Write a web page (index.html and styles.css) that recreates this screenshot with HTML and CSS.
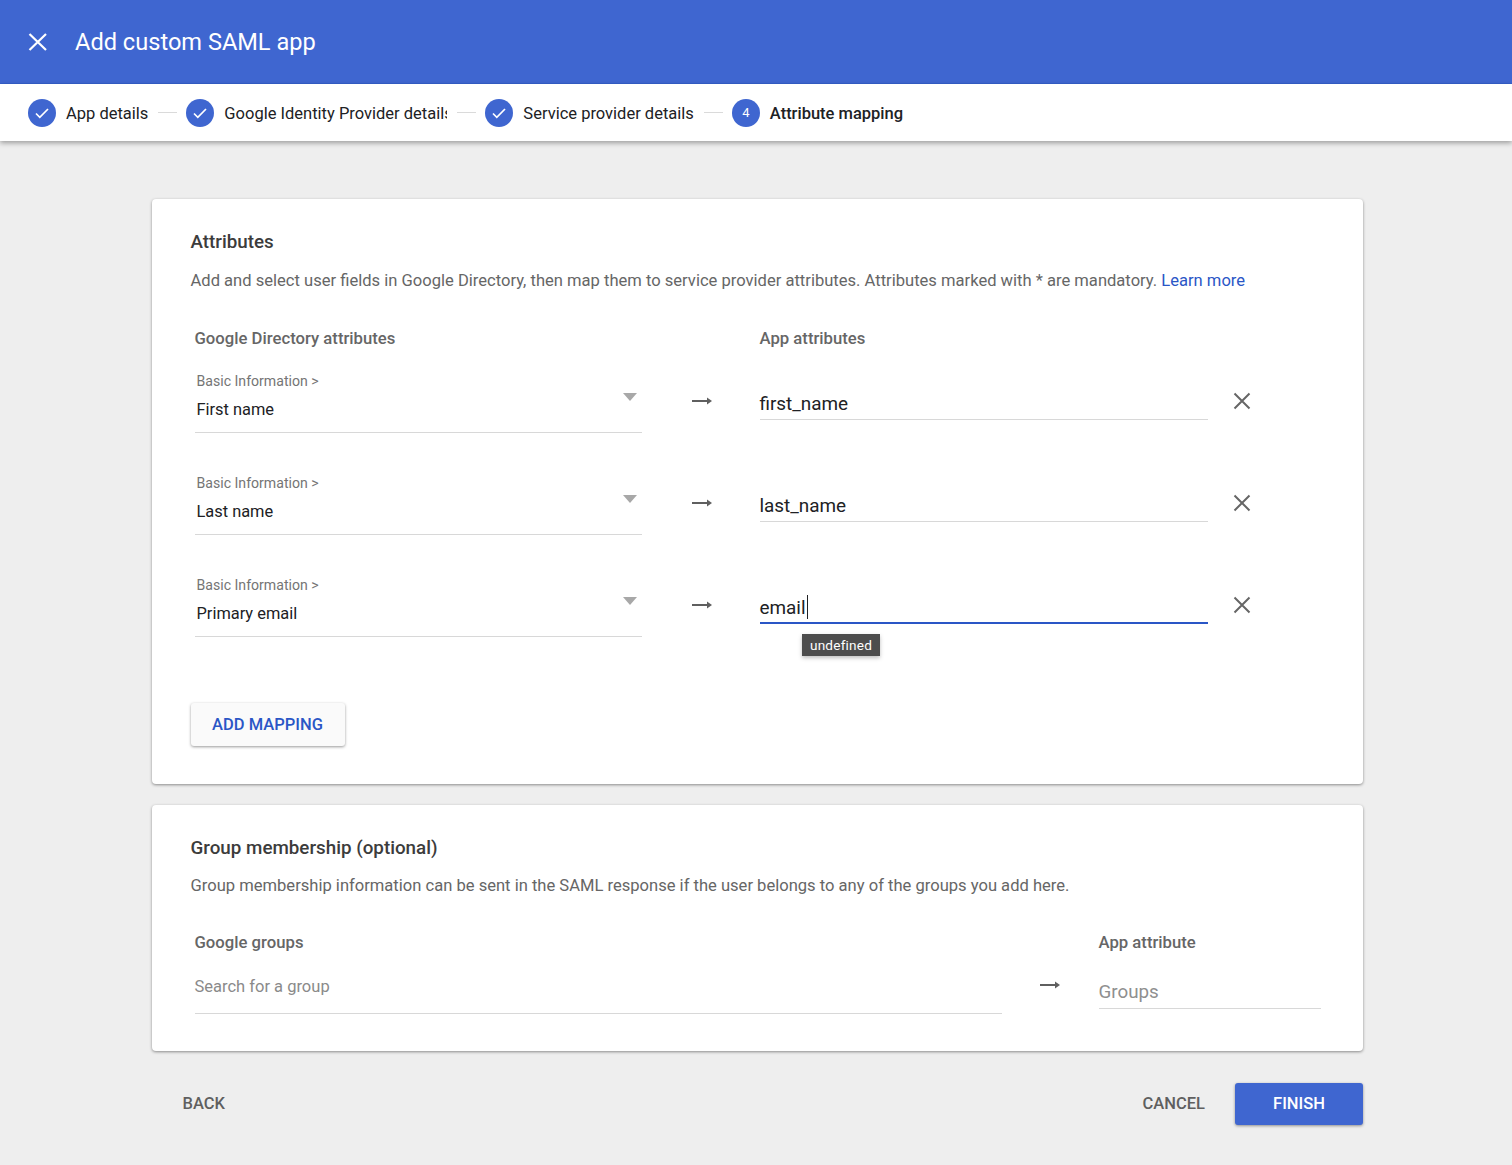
FILE: index.html
```html
<!DOCTYPE html>
<html lang="en">
<head>
<meta charset="utf-8">
<title>Add custom SAML app</title>
<link rel="stylesheet" href="styles.css">
</head>
<body>
<header class="topbar">
  <svg class="close-icon" width="20" height="20" viewBox="0 0 20 20"><path d="M1.500 2L18 18M18 2L1.500 18" fill="none" stroke="#fff" stroke-width="2.200"/></svg>
  <h1 class="title">Add custom SAML app</h1>
</header>
<nav class="stepper">
  <div class="step">
    <span class="badge"><svg width="14" height="12" viewBox="0 0 14 12"><path d="M1 6.500L4.800 10.300L13 2" fill="none" stroke="#fff" stroke-width="1.700"/></svg></span>
    <span class="step-label">App details</span>
  </div>
  <span class="connector"></span>
  <div class="step">
    <span class="badge"><svg width="14" height="12" viewBox="0 0 14 12"><path d="M1 6.500L4.800 10.300L13 2" fill="none" stroke="#fff" stroke-width="1.700"/></svg></span>
    <span class="step-label step-label-clip">Google Identity Provider details</span>
  </div>
  <span class="connector"></span>
  <div class="step">
    <span class="badge"><svg width="14" height="12" viewBox="0 0 14 12"><path d="M1 6.500L4.800 10.300L13 2" fill="none" stroke="#fff" stroke-width="1.700"/></svg></span>
    <span class="step-label">Service provider details</span>
  </div>
  <span class="connector"></span>
  <div class="step">
    <span class="badge badge-num">4</span>
    <span class="step-label step-label-active">Attribute mapping</span>
  </div>
</nav>
<main class="content">
  <section class="card card-attrs">
    <h2 class="card-title">Attributes</h2>
    <p class="card-desc">Add and select user fields in Google Directory, then map them to service provider attributes. Attributes marked with * are mandatory. <a class="link" href="#">Learn more</a></p>
    <div class="map-grid map-head">
      <div class="col-head">Google Directory attributes</div>
      <div></div>
      <div class="col-head">App attributes</div>
      <div></div>
    </div>
    <div class="map-grid map-row">
      <div class="select">
        <div class="select-crumb">Basic Information &gt;</div>
        <div class="select-value">First name</div>
        <span class="caret"></span>
      </div>
      <svg class="arrow" width="20" height="10" viewBox="0 0 20 10"><path d="M0 5H17" stroke="#5f5f5f" stroke-width="2"/><path d="M15 1.5L20 5L15 8.500Z" fill="#5f5f5f"/></svg>
      <div class="app-input">first_name</div>
      <svg class="remove" width="18" height="18" viewBox="0 0 18 18"><path d="M1.500 1.500L16.500 16.500M16.500 1.500L1.500 16.500" fill="none" stroke="#666" stroke-width="2"/></svg>
    </div>
    <div class="map-grid map-row">
      <div class="select">
        <div class="select-crumb">Basic Information &gt;</div>
        <div class="select-value">Last name</div>
        <span class="caret"></span>
      </div>
      <svg class="arrow" width="20" height="10" viewBox="0 0 20 10"><path d="M0 5H17" stroke="#5f5f5f" stroke-width="2"/><path d="M15 1.5L20 5L15 8.500Z" fill="#5f5f5f"/></svg>
      <div class="app-input">last_name</div>
      <svg class="remove" width="18" height="18" viewBox="0 0 18 18"><path d="M1.500 1.500L16.500 16.500M16.500 1.500L1.500 16.500" fill="none" stroke="#666" stroke-width="2"/></svg>
    </div>
    <div class="map-grid map-row">
      <div class="select">
        <div class="select-crumb">Basic Information &gt;</div>
        <div class="select-value">Primary email</div>
        <span class="caret"></span>
      </div>
      <svg class="arrow" width="20" height="10" viewBox="0 0 20 10"><path d="M0 5H17" stroke="#5f5f5f" stroke-width="2"/><path d="M15 1.5L20 5L15 8.500Z" fill="#5f5f5f"/></svg>
      <div class="app-input app-input-focus">email<span class="cursor"></span><span class="tooltip">undefined</span></div>
      <svg class="remove" width="18" height="18" viewBox="0 0 18 18"><path d="M1.500 1.500L16.500 16.500M16.500 1.500L1.500 16.500" fill="none" stroke="#666" stroke-width="2"/></svg>
    </div>
    <button class="btn-add" type="button">ADD MAPPING</button>
  </section>
  <section class="card card-groups">
    <h2 class="card-title">Group membership (optional)</h2>
    <p class="card-desc card-desc-groups">Group membership information can be sent in the SAML response if the user belongs to any of the groups you add here.</p>
    <div class="group-grid">
      <div class="col-head">Google groups</div>
      <div></div>
      <div class="col-head">App attribute</div>
      <div class="group-search">Search for a group</div>
      <svg class="arrow" width="20" height="10" viewBox="0 0 20 10"><path d="M0 5H17" stroke="#5f5f5f" stroke-width="2"/><path d="M15 1.5L20 5L15 8.500Z" fill="#5f5f5f"/></svg>
      <div class="group-attr">Groups</div>
    </div>
  </section>
  <footer class="actions">
    <button class="btn-text btn-back" type="button">BACK</button>
    <div class="actions-right">
      <button class="btn-text" type="button">CANCEL</button>
      <button class="btn-finish" type="button">FINISH</button>
    </div>
  </footer>
</main>
</body>
</html>
```
FILE: styles.css
```css
* { box-sizing: border-box; }
html, body { margin: 0; padding: 0; }
body { width: 1512px; height: 1165px; overflow: hidden; background: #eeeeee; font-family: Roboto, "Liberation Sans", sans-serif; color: #202124; }
.topbar { height: 84px; background: #3f66d0; border-bottom: 1px solid #3560cc; display: flex; align-items: center; padding-left: 28px; color: #fff; }
.close-icon { display: block; }
.title { margin: 0 0 0 27px; font-size: 23.6px; font-weight: 400; line-height: 32px; }
.stepper { position: relative; height: 57px; background: #fff; display: flex; align-items: center; padding-left: 28px; box-shadow: 0 2px 5px rgba(0,0,0,.35); }
.step { display: flex; align-items: center; }
.badge { width: 28px; height: 28px; border-radius: 50%; background: #3f66d0; display: flex; align-items: center; justify-content: center; color: #fff; font-size: 13px; }
.step-label { margin: 2px 0 0 10px; font-size: 16.5px; line-height: 20px; color: #202124; white-space: nowrap; }
.step-label-clip { width: 223px; overflow: hidden; }
.step-label-active { font-weight: 500; }
.connector { width: 19px; height: 1px; background: #dadada; margin: 0 9px 0 10px; }
.content { width: 1211px; margin-left: 152px; padding-top: 58px; }
.card { background: #fff; border-radius: 4px; box-shadow: 0 1px 3px rgba(0,0,0,.42); padding-left: 38.5px; padding-right: 42px; }
.card-attrs { height: 585px; padding-top: 30px; }
.card-groups { height: 246px; margin-top: 21px; padding-top: 30px; }
.card-title { margin: 0; font-size: 18.8px; line-height: 26px; font-weight: 500; color: #3c3c3c; }
.card-desc { margin: 14px 0 0; font-size: 16.57px; line-height: 24px; color: #666; }
.card-desc-groups { margin-top: 13px; }
.link { color: #2a56c6; text-decoration: none; }
.map-grid { display: grid; grid-template-columns: 447px 118px 448px 64px; margin-left: 4px; }
.map-head { margin-top: 36px; }
.col-head { font-size: 16.7px; line-height: 20px; font-weight: 500; color: #666; }
.map-row { height: 102px; align-items: start; }
.map-head + .map-row { margin-top: 14px; }
.select { position: relative; height: 70px; margin-left: .5px; padding: 8px 1.5px 0; border-bottom: 1px solid #d8d8d8; }
.select-crumb { font-size: 14.1px; line-height: 20px; color: #757575; }
.select-value { margin-top: 8.5px; font-size: 16.4px; line-height: 20px; color: #202124; }
.caret { position: absolute; right: 5px; top: 30px; width: 0; height: 0; border-left: 7.5px solid transparent; border-right: 7.5px solid transparent; border-top: 8px solid #a8a8a8; }
.arrow { justify-self: start; margin-left: 50px; margin-top: 33px; display: block; }
.app-input { position: relative; height: 57px; padding-top: 29px; font-size: 18.9px; line-height: 24px; color: #202124; border-bottom: 1px solid #d8d8d8; }
.app-input-focus { padding-top: 28px; border-bottom: 2px solid #2a56c6; height: 57px; }
.cursor { display: inline-block; width: 1px; height: 24px; background: #202124; vertical-align: -5px; margin-left: 1px; }
.tooltip { position: absolute; left: 42.5px; top: 67px; height: 22px; width: 78px; text-align: center; background: #4d4d4d; color: #fff; font-size: 13.6px; line-height: 22px; letter-spacing: .2px; box-shadow: 0 2px 4px rgba(0,0,0,.25); white-space: nowrap; }
.remove { display: block; margin-left: 25px; margin-top: 29px; }
.btn-add { display: block; width: 154px; height: 43px; margin-top: 34px; padding: 0; border: 0; border-radius: 3px; background: #fafafa; color: #2a56c6; font: 500 16.5px/20px Roboto, "Liberation Sans", sans-serif; box-shadow: 0 1px 3px rgba(0,0,0,.4); }
.group-grid { display: grid; grid-template-columns: 807px 97px 222px; grid-template-rows: 20px auto; margin-left: 4px; margin-top: 35px; }
.group-search { height: 61px; padding-top: 24px; font-size: 16.5px; line-height: 20px; color: #8a8a8a; border-bottom: 1px solid #d8d8d8; }
.group-grid .arrow { margin-left: 38px; margin-top: 27px; }
.group-attr { height: 56px; padding-top: 27px; font-size: 18.8px; line-height: 24px; color: #8f8f8f; border-bottom: 1px solid #d8d8d8; }
.actions { display: flex; justify-content: space-between; align-items: center; margin-top: 32px; height: 42px; }
.actions-right { display: flex; align-items: center; }
.btn-text { padding: 0; border: 0; background: none; font: 500 16.5px/20px Roboto, "Liberation Sans", sans-serif; color: #5f5f5f; }
.btn-back { margin-left: 30.5px; }
.btn-finish { width: 128px; height: 42px; margin-left: 30px; padding: 0; border: 0; border-radius: 3px; background: #3f66d0; color: #fff; font: 500 16.5px/20px Roboto, "Liberation Sans", sans-serif; box-shadow: 0 1px 3px rgba(0,0,0,.4); }
```
